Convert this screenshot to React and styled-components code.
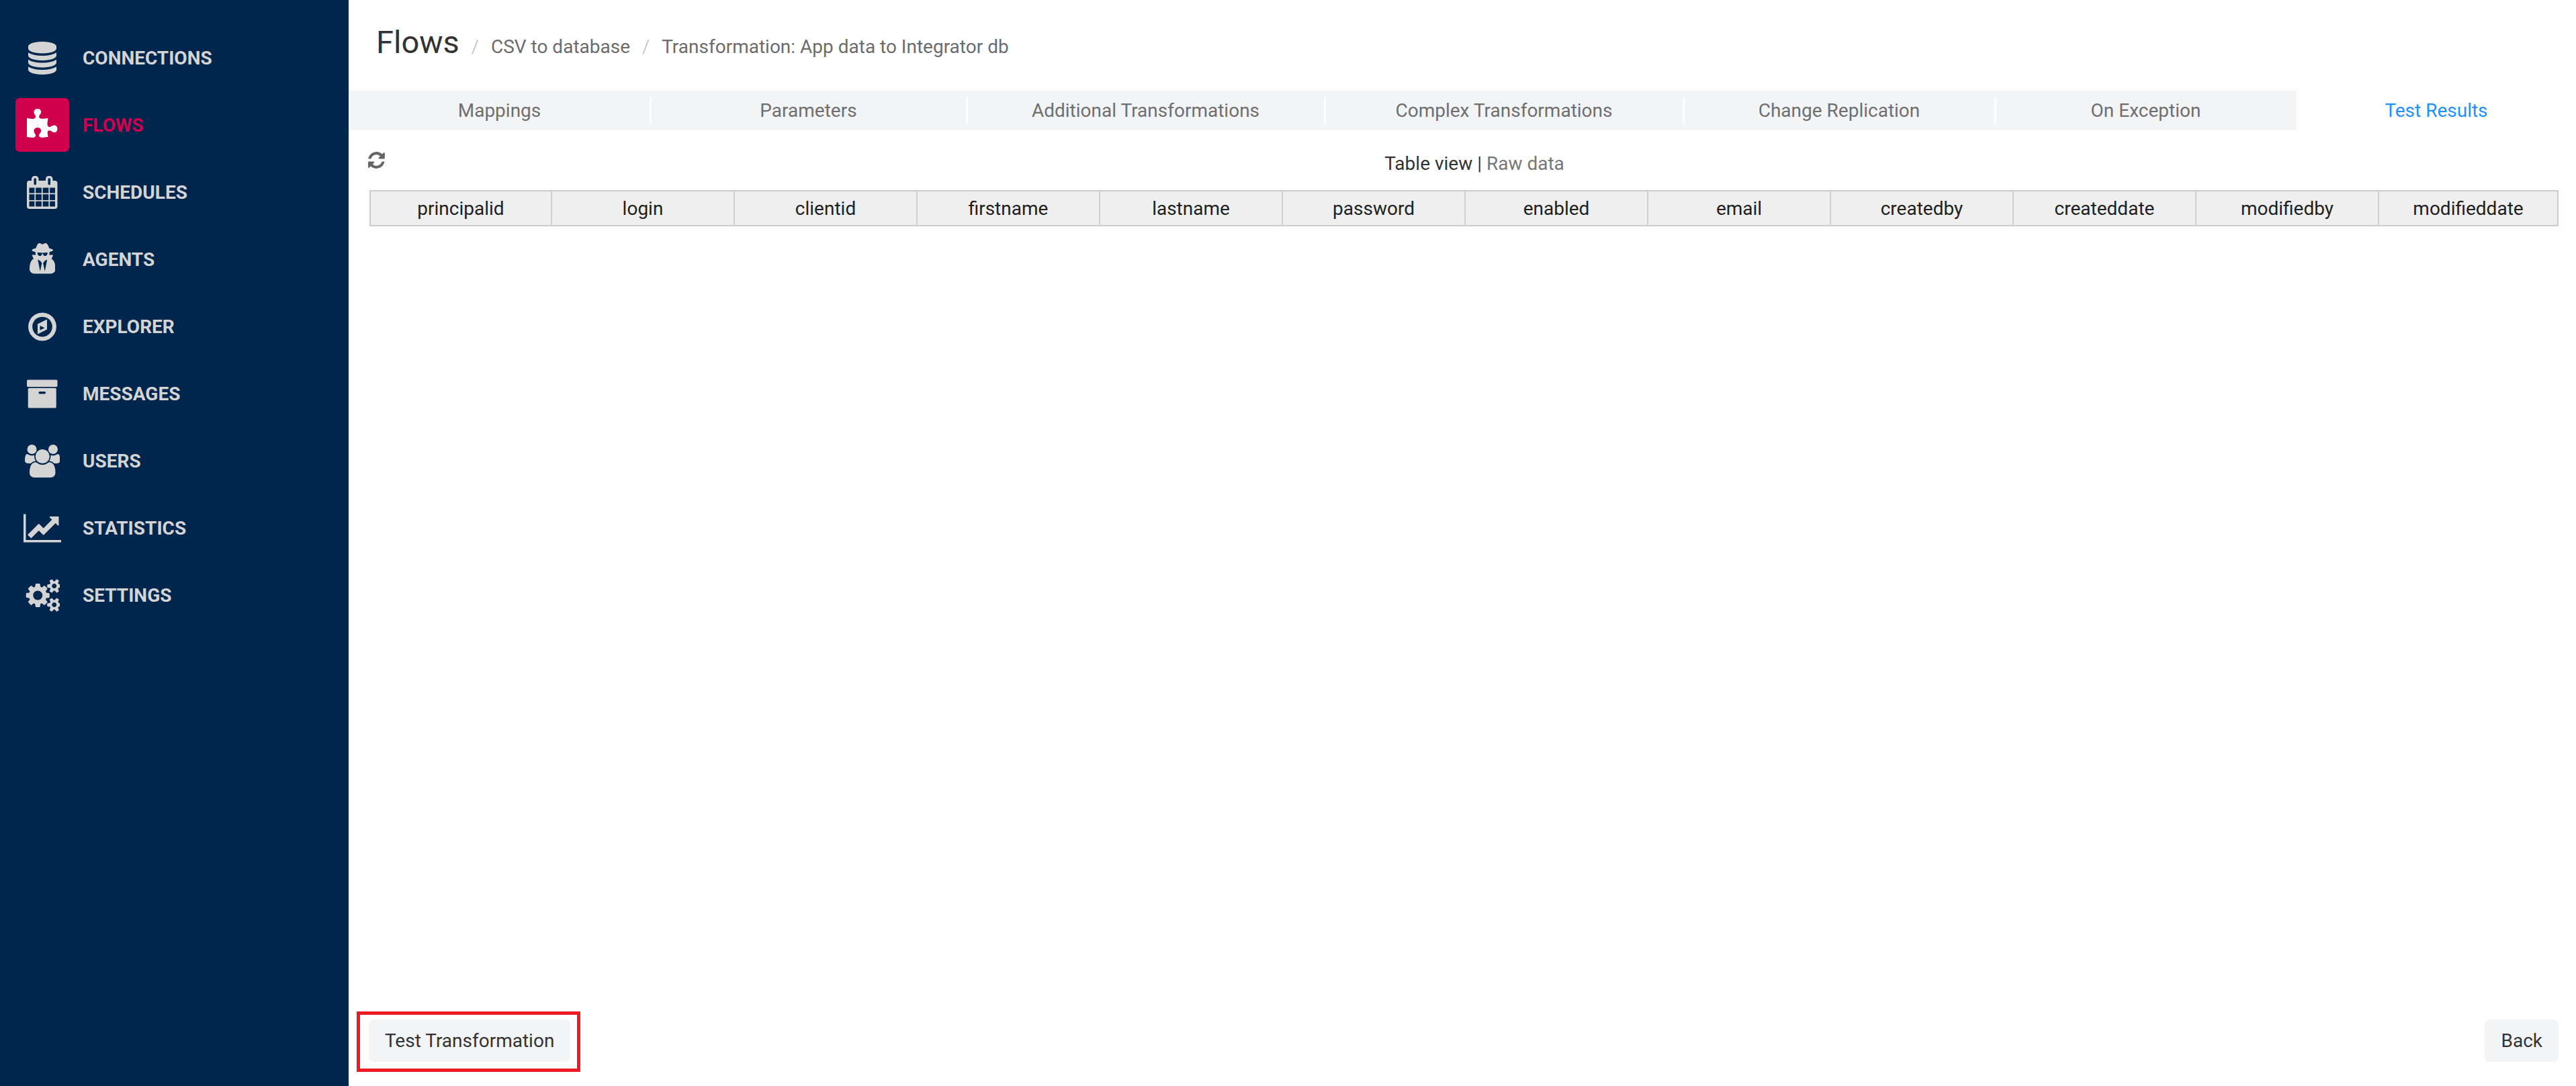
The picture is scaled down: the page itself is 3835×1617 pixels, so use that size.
import React from "react";
import styled, { createGlobalStyle } from "styled-components";

const Global = createGlobalStyle`
  html, body { margin: 0; padding: 0; background: #fff; }
  body { font-family: Roboto, "Liberation Sans", sans-serif; font-size: 28px; }
`;

const Page = styled.div`
  display: flex;
  height: 1617px;
  overflow: hidden;
`;
const Sidebar = styled.nav`
  flex: 0 0 519px;
  background: #00264d;
  padding-top: 36px;
  box-sizing: border-box;
`;
const NavItem = styled.a`
  display: flex;
  align-items: center;
  height: 100px;
  padding-left: 23px;
  color: ${(p) => (p.$active ? "#d1004f" : "#d4d4d4")};
  font-size: 28px;
  font-weight: 700;
`;
const IconBox = styled.span`
  flex: 0 0 80px;
  height: 80px;
  margin-right: 20px;
  border-radius: 6px;
  display: flex;
  align-items: center;
  justify-content: center;
  background: ${(p) => (p.$active ? "#d1004f" : "transparent")};
  color: ${(p) => (p.$active ? "#fff" : "#d4d4d4")};
`;
const Glyph = styled.svg`
  height: ${(p) => p.$size || 49}px;
  fill: currentColor;
  display: block;
  flex: none;
`;
const Main = styled.main`
  flex: 1;
  min-width: 0;
  display: flex;
  flex-direction: column;
`;
const Header = styled.header`
  height: 135px;
  display: flex;
  align-items: baseline;
  padding: 35px 0 0 41px;
  box-sizing: border-box;
`;
const Title = styled.h1`
  margin: 0;
  font-size: 47px;
  font-weight: 400;
  line-height: 56px;
  color: #333;
`;
const Crumb = styled.span`
  font-size: 28px;
  font-weight: 400;
  color: #6c6c6c;
`;
const CrumbSep = styled.span`
  font-size: 28px;
  font-weight: 300;
  color: #bbb;
  margin: 0 18px;
`;
const Tabs = styled.div`
  display: grid;
  grid-template-columns: 449px 471px 533px 534px 464px 449px 1fr;
  height: 59px;
`;
const Tab = styled.div`
  position: relative;
  display: flex;
  align-items: center;
  justify-content: center;
  background: ${(p) => (p.$active ? "#fff" : "#f3f4f6")};
  color: ${(p) => (p.$active ? "#1e90ff" : "#6f6f6f")};
  font-size: 28px;
  &::before {
    content: "";
    display: ${(p) => (p.$sep ? "block" : "none")};
    position: absolute;
    left: -1px;
    top: 10px;
    bottom: 9px;
    width: 3px;
    background: #fff;
  }
`;
const Toolbar = styled.div`
  display: flex;
  align-items: center;
  height: 89px;
  padding: 0 26px 0 31px;
`;
const RefreshBox = styled.span`
  flex: 0 0 31px;
  color: #666;
  display: flex;
  margin-left: -2px;
  padding-right: 2px;
  margin-top: -1px;
`;
const ViewSwitch = styled.div`
  flex: 1;
  text-align: center;
  color: #333;
  font-size: 28px;
  padding-top: 10px;
`;
const RawLink = styled.span`
  color: #777;
`;
const Table = styled.div`
  display: grid;
  grid-template-columns: 268px repeat(10, 272px) 1fr;
  margin: 0 26px 0 31px;
  height: 54px;
  box-sizing: border-box;
  border: 2px solid #ccc;
  background: #efefef;
`;
const HeadCell = styled.div`
  display: flex;
  align-items: center;
  justify-content: center;
  font-size: 28px;
  color: #212121;
  border-left: ${(p) => (p.$first ? "none" : "2px solid #d0d0d0")};
`;
const Spacer = styled.div`
  flex: 1;
`;
const Footer = styled.footer`
  display: flex;
  justify-content: space-between;
  align-items: flex-start;
  height: 111px;
  padding: 0 26px 0 12px;
`;
const Highlight = styled.div`
  border: 5px solid #ed1c24;
  padding: 7px 10px 10px 13px;
`;
const Button = styled.button`
  display: block;
  height: 63px;
  padding: 0 24px;
  border: none;
  border-radius: 8px;
  background: #f3f4f6;
  color: #333;
  font: 400 28px Roboto, sans-serif;
`;
const BackWrap = styled.div`
  padding-top: 12px;
`;

const ICONS = {
  database: { vb: "0 0 1536 1792", d: "M768 768q237 0 443-43t325-127v170q0 69-103 128t-280 93.5-385 34.5-385-34.5-280-93.5-103-128v-170q119 84 325 127t443 43zm0 768q237 0 443-43t325-127v170q0 69-103 128t-280 93.5-385 34.5-385-34.5-280-93.5-103-128v-170q119 84 325 127t443 43zm0-384q237 0 443-43t325-127v170q0 69-103 128t-280 93.5-385 34.5-385-34.5-280-93.5-103-128v-170q119 84 325 127t443 43zm0-1152q208 0 385 34.5t280 93.5 103 128v128q0 69-103 128t-280 93.5-385 34.5-385-34.5-280-93.5-103-128v-128q0-69 103-128t280-93.5 385-34.5z" },
  puzzle: { vb: "64 0 1664 1792", d: "M1728 1098q0 81-44.5 135t-123.5 54q-41 0-77.5-17.5t-59-38-56.5-38-71-17.5q-110 0-110 124 0 39 16 115t15 115v5q-22 0-33 1-34 3-97.5 11.5t-115.5 13.5-98 5q-61 0-103-26.5t-42-83.5q0-37 17.5-71t38-56.5 38-59 17.5-77.5q0-79-54-123.5t-135-44.5q-84 0-143 45.5t-59 127.5q0 43 15 83t33.5 64.5 33.5 53 15 50.5q0 45-46 89-37 35-117 35-95 0-245-24-9-2-27.5-4t-27.5-4l-13-2q-1 0-3-1-2 0-2-1v-1024q2 1 17.5 3.5t34 5 21.5 3.5q150 24 245 24 80 0 117-35 46-44 46-89 0-22-15-50.5t-33.5-53-33.5-64.5-15-83q0-82 59-127.5t144-45.5q80 0 134 44.5t54 123.5q0 41-17.5 77.5t-38 59-38 56.5-17.5 71q0 57 42 83.5t103 26.5q64 0 180-15t163-17v2q-1 2-3.5 17.5t-5 34-3.5 21.5q-24 150-24 245 0 80 35 117 44 46 89 46 22 0 50.5-15t53-33.5 64.5-33.5 83-15q82 0 127.5 59t45.5 143z" },
  calendar: { vb: "64 0 1664 1792", d: "M192 1664h288v-288h-288v288zm352 0h320v-288h-320v288zm-352-352h288v-320h-288v320zm352 0h320v-320h-320v320zm-352-384h288v-288h-288v288zm736 736h320v-288h-320v288zm-384-736h320v-288h-320v288zm768 736h288v-288h-288v288zm-384-352h320v-320h-320v320zm-352-864v-288q0-13-9.5-22.5t-22.5-9.5h-64q-13 0-22.5 9.5t-9.5 22.5v288q0 13 9.5 22.5t22.5 9.5h64q13 0 22.5-9.5t9.5-22.5zm736 864h288v-320h-288v320zm-384-384h320v-288h-320v288zm384 0h288v-288h-288v288zm32-480v-288q0-13-9.5-22.5t-22.5-9.5h-64q-13 0-22.5 9.5t-9.5 22.5v288q0 13 9.5 22.5t22.5 9.5h64q13 0 22.5-9.5t9.5-22.5zm384-64v1280q0 52-38 90t-90 38h-1408q-52 0-90-38t-38-90v-1280q0-52 38-90t90-38h128v-96q0-66 47-113t113-47h64q66 0 113 47t47 113v96h384v-96q0-66 47-113t113-47h64q66 0 113 47t47 113v96h128q52 0 90 38t38 90z" },
  secret: { vb: "0 0 1408 1792", d: "M576 1536l96-448-96-128-128-64zm256 0l128-640-128 64-96 128zm160-1010q-2-4-4-6-10-8-96-8-70 0-167 19-7 2-21 2t-21-2q-97-19-167-19-86 0-96 8-2 2-4 6 2 18 4 27 2 3 7.5 6.5t7.5 10.5q2 4 7.5 20.5t7 20.5 7.5 17 8.5 17 9 14 12 13.5 14 9.5 17.5 8 20.5 4 24.5 2q36 0 59-12.5t32.5-30 14.5-34.5 11.5-29.5 17.5-12.5h12q11 0 17.5 12.5t11.5 29.5 14.5 34.5 32.5 30 59 12.5q13 0 24.5-2t20.5-4 17.5-8 14-9.5 12-13.5 9-14 8.5-17 7.5-17 7-20.5 7.5-20.5q2-7 7.5-10.5t7.5-6.5q2-9 4-27zm416 879q0 121-73 190t-194 69h-874q-121 0-194-69t-73-190q0-61 4.5-118t19-125.5 37.5-123.5 63.5-103.5 93.5-74.5l-90-220h214q-22-64-22-128 0-12 2-32-194-40-194-96 0-57 210-99 17-62 51.5-134t70.5-114q32-37 76-37 30 0 84 31t84 31 84-31 84-31q44 0 76 36 36 42 70.5 114t51.5 134q210 42 210 99 0 56-194 96 7 81-20 160h214l-82 225q63 33 107.5 96.5t65.5 143.5 29 151.5 8 148.5z" },
  compass: { vb: "0 0 1536 1792", d: "M640 1088l256-128-256-128v256zm384-591v542l-512 256v-542zm288 399q0-148-73-273t-198-198-273-73-273 73-198 198-73 273 73 273 198 198 273 73 273-73 198-198 73-273zm224 0q0 209-103 385.5t-279.5 279.5-385.5 103-385.5-103-279.5-279.5-103-385.5 103-385.5 279.5-279.5 385.5-103 385.5 103 279.5 279.5 103 385.5z" },
  archive: { vb: "64 0 1664 1792", d: "M1088 832q0-26-19-45t-45-19h-256q-26 0-45 19t-19 45 19 45 45 19h256q26 0 45-19t19-45zm576-192v960q0 26-19 45t-45 19h-1408q-26 0-45-19t-19-45v-960q0-26 19-45t45-19h1408q26 0 45 19t19 45zm64-448v256q0 26-19 45t-45 19h-1536q-26 0-45-19t-19-45v-256q0-26 19-45t45-19h1536q26 0 45 19t19 45z" },
  users: { vb: "-64 0 1920 1792", d: "M529 896q-162 5-265 128h-134q-82 0-138-40.5t-56-118.5q0-353 124-353 6 0 43.5 21t97.5 42.5 119 21.5q67 0 133-23-5 37-5 66 0 139 81 256zm1071 637q0 120-73 189.5t-194 69.5h-874q-121 0-194-69.5t-73-189.5q0-53 3.5-103.5t14-109 26.5-108.5 43-97.5 62-81 85.5-53.5 111.5-20q10 0 43 21.5t73 48 107 48 135 21.5 135-21.5 107-48 73-48 43-21.5q61 0 111.5 20t85.5 53.5 62 81 43 97.5 26.5 108.5 14 109 3.5 103.5zm-1024-1277q0 106-75 181t-181 75-181-75-75-181 75-181 181-75 181 75 75 181zm704 384q0 159-112.5 271.5t-271.5 112.5-271.5-112.5-112.5-271.5 112.5-271.5 271.5-112.5 271.5 112.5 112.5 271.5zm576 225q0 78-56 118.5t-138 40.5h-134q-103-123-265-128 81-117 81-256 0-29-5-66 66 23 133 23 59 0 119-21.5t97.5-42.5 43.5-21q124 0 124 353zm-128-609q0 106-75 181t-181 75-181-75-75-181 75-181 181-75 181 75 75 181z" },
  chart: { vb: "-128 0 2048 1792", d: "M1920 1536v128h-2048v-1536h128v1408h1920zm-128-1248v435q0 21-19.5 29.5t-35.5-7.5l-121-121-633 633q-10 10-23 10t-23-10l-233-233-416 416-192-192 585-585q10-10 23-10t23 10l233 233 464-464-121-121q-16-16-7.5-35.5t29.5-19.5h435q14 0 23 9t9 23z" },
  cogs: { vb: "0 0 1920 1792", d: "M960 896q0-106-75-181t-181-75-181 75-75 181 75 181 181 75 181-75 75-181zm768 512q0-52-38-90t-90-38-90 38-38 90q0 53 37.5 90.5t90.5 37.5 90.5-37.5 37.5-90.5zm0-1024q0-52-38-90t-90-38-90 38-38 90q0 53 37.5 90.5t90.5 37.5 90.5-37.5 37.5-90.5zm-384 421v185q0 10-7 19.5t-16 10.5l-155 24q-11 35-32 76 34 48 90 115 7 11 7 20 0 12-7 19-23 30-82.5 89.5t-78.5 59.5q-11 0-21-7l-115-90q-37 19-77 31-11 108-23 155-7 24-30 24h-186q-11 0-20-7.5t-10-17.5l-23-153q-34-10-75-31l-118 89q-7 7-20 7-11 0-21-8-144-133-144-160 0-9 7-19 10-14 41-53t47-61q-23-44-35-82l-152-24q-10-1-17-9.5t-7-19.5v-185q0-10 7-19.5t16-10.5l155-24q11-35 32-76-34-48-90-115-7-11-7-20 0-12 7-20 22-30 82-89t79-59q11 0 21 7l115 90q34-18 77-32 11-108 23-154 7-24 30-24h186q11 0 20 7.5t10 17.5l23 153q34 10 75 31l118-89q8-7 20-7 11 0 21 8 144 133 144 160 0 8-7 19-12 16-42 54t-45 60q23 48 34 82l152 23q10 2 17 10.5t7 19.5zm640 533v140q0 16-149 31-12 27-30 52 51 113 51 138 0 4-4 7-122 71-124 71-8 0-46-47t-52-68q-20 2-30 2t-30-2q-14 21-52 68t-46 47q-2 0-124-71-4-3-4-7 0-25 51-138-18-25-30-52-149-15-149-31v-140q0-16 149-31 13-29 30-52-51-113-51-138 0-4 4-7 4-2 35-20t59-34 30-16q8 0 46 46.5t52 67.5q20-2 30-2t30 2q51-71 92-112l6-2q4 0 124 70 4 3 4 7 0 25-51 138 17 23 30 52 149 15 149 31zm0-1024v140q0 16-149 31-12 27-30 52 51 113 51 138 0 4-4 7-122 71-124 71-8 0-46-47t-52-68q-20 2-30 2t-30-2q-14 21-52 68t-46 47q-2 0-124-71-4-3-4-7 0-25 51-138-18-25-30-52-149-15-149-31v-140q0-16 149-31 13-29 30-52-51-113-51-138 0-4 4-7 4-2 35-20t59-34 30-16q8 0 46 46.5t52 67.5q20-2 30-2t30 2q51-71 92-112l6-2q4 0 124 70 4 3 4 7 0 25-51 138 17 23 30 52 149 15 149 31z" },
  refresh: { vb: "0 0 1536 1792", d: "M1511 1056q0 5-1 7-64 268-268 434.5t-478 166.5q-146 0-282.5-55t-243.5-157l-129 129q-19 19-45 19t-45-19-19-45v-448q0-26 19-45t45-19h448q26 0 45 19t19 45-19 45l-137 137q71 66 161 102t187 36q134 0 250-65t186-179q11-17 53-117 8-23 30-23h192q13 0 22.5 9.5t9.5 22.5zm25-800v448q0 26-19 45t-45 19h-448q-26 0-45-19t-19-45 19-45l138-138q-148-137-349-137-134 0-250 65t-186 179q-11 17-53 117-8 23-30 23h-199q-13 0-22.5-9.5t-9.5-22.5v-7q65-268 270-434.5t480-166.5q146 0 284 55.5t245 156.5l130-129q19-19 45-19t45 19 19 45z" },
};

const Icon = ({ name, size }) => (
  <Glyph viewBox={ICONS[name].vb} $size={size} aria-hidden="true">
    <path d={ICONS[name].d} />
  </Glyph>
);

const NAV = [
  ["database", "CONNECTIONS"],
  ["puzzle", "FLOWS", true],
  ["calendar", "SCHEDULES"],
  ["secret", "AGENTS"],
  ["compass", "EXPLORER"],
  ["archive", "MESSAGES"],
  ["users", "USERS"],
  ["chart", "STATISTICS"],
  ["cogs", "SETTINGS"],
];
const TABS = ["Mappings", "Parameters", "Additional Transformations", "Complex Transformations", "Change Replication", "On Exception"];
const COLS = ["principalid", "login", "clientid", "firstname", "lastname", "password", "enabled", "email", "createdby", "createddate", "modifiedby", "modifieddate"];

export default function App() {
  return (
    <Page>
      <Global />
      <Sidebar>
        {NAV.map(([icon, label, active]) => (
          <NavItem key={label} $active={active}>
            <IconBox $active={active}><Icon name={icon} /></IconBox>
            {label}
          </NavItem>
        ))}
      </Sidebar>
      <Main>
        <Header>
          <Title>Flows</Title>
          <CrumbSep>/</CrumbSep>
          <Crumb>CSV to database</Crumb>
          <CrumbSep>/</CrumbSep>
          <Crumb>Transformation: App data to Integrator db</Crumb>
        </Header>
        <Tabs>
          {TABS.map((t, i) => (
            <Tab key={t} $sep={i > 0}>{t}</Tab>
          ))}
          <Tab $active>Test Results</Tab>
        </Tabs>
        <Toolbar>
          <RefreshBox><Icon name="refresh" size={29} /></RefreshBox>
          <ViewSwitch>Table view | <RawLink>Raw data</RawLink></ViewSwitch>
        </Toolbar>
        <Table>
          {COLS.map((c, i) => (
            <HeadCell key={c} $first={i === 0}>{c}</HeadCell>
          ))}
        </Table>
        <Spacer />
        <Footer>
          <Highlight><Button>Test Transformation</Button></Highlight>
          <BackWrap><Button>Back</Button></BackWrap>
        </Footer>
      </Main>
    </Page>
  );
}
